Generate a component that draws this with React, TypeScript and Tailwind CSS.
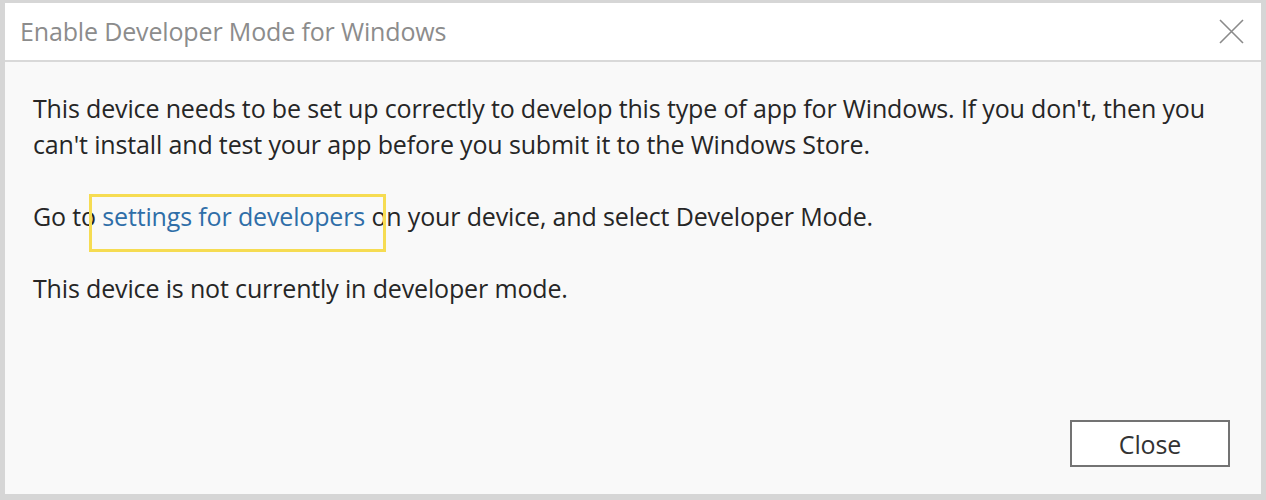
export default function App() {
  return (
    <div
      className="w-[1266px] h-[500px] bg-[#d6d6d6] pt-[3px] pl-[5px] pr-[5px] pb-[6px] overflow-hidden"
      style={{ fontFamily: '"Open Sans", "Noto Sans", sans-serif' }}
    >
      <div className="flex flex-col h-full bg-[#f9f9f9]">
        {/* Title bar */}
        <div className="flex items-center justify-between h-[59px] bg-white border-b-[2px] border-[#d9d9d9] pl-[15px] pr-[17px]">
          <span className="text-[25px] text-[#8c8c8c] tracking-[-0.15px]">Enable Developer Mode for Windows</span>
          <svg width="25" height="25" viewBox="0 0 25 25" className="text-[#8a8a8a]">
            <path d="M1 1 L24 24 M24 1 L1 24" stroke="currentColor" strokeWidth="1.6" fill="none" />
          </svg>
        </div>

        {/* Body */}
        <div className="flex flex-col flex-1 pl-[28px] pt-[28px] text-[25px] leading-[36px] tracking-[-0.15px] text-[#262626]">
          <p className="max-w-[1195px]">
            This device needs to be set up correctly to develop this type of app for Windows. If you don't, then you
            can't install and test your app before you submit it to the Windows Store.
          </p>
          <p className="mt-[36px]">
            Go to{' '}
            <span className="relative text-[#2f6ea8]">
              settings for developers
              <span className="absolute left-[-13px] right-[-21px] top-[-5px] bottom-[-19px] border-[3px] border-[#f6dc52]" />
            </span>{' '}
            on your device, and select Developer Mode.
          </p>
          <p className="mt-[36px]">This device is not currently in developer mode.</p>

          <div className="flex-1" />
          <div className="flex justify-end pb-[27px] pr-[31px]">
            <button className="w-[160px] h-[47px] border-2 border-[#737373] bg-white text-[25px] text-[#333]">
              Close
            </button>
          </div>
        </div>
      </div>
    </div>
  )
}
